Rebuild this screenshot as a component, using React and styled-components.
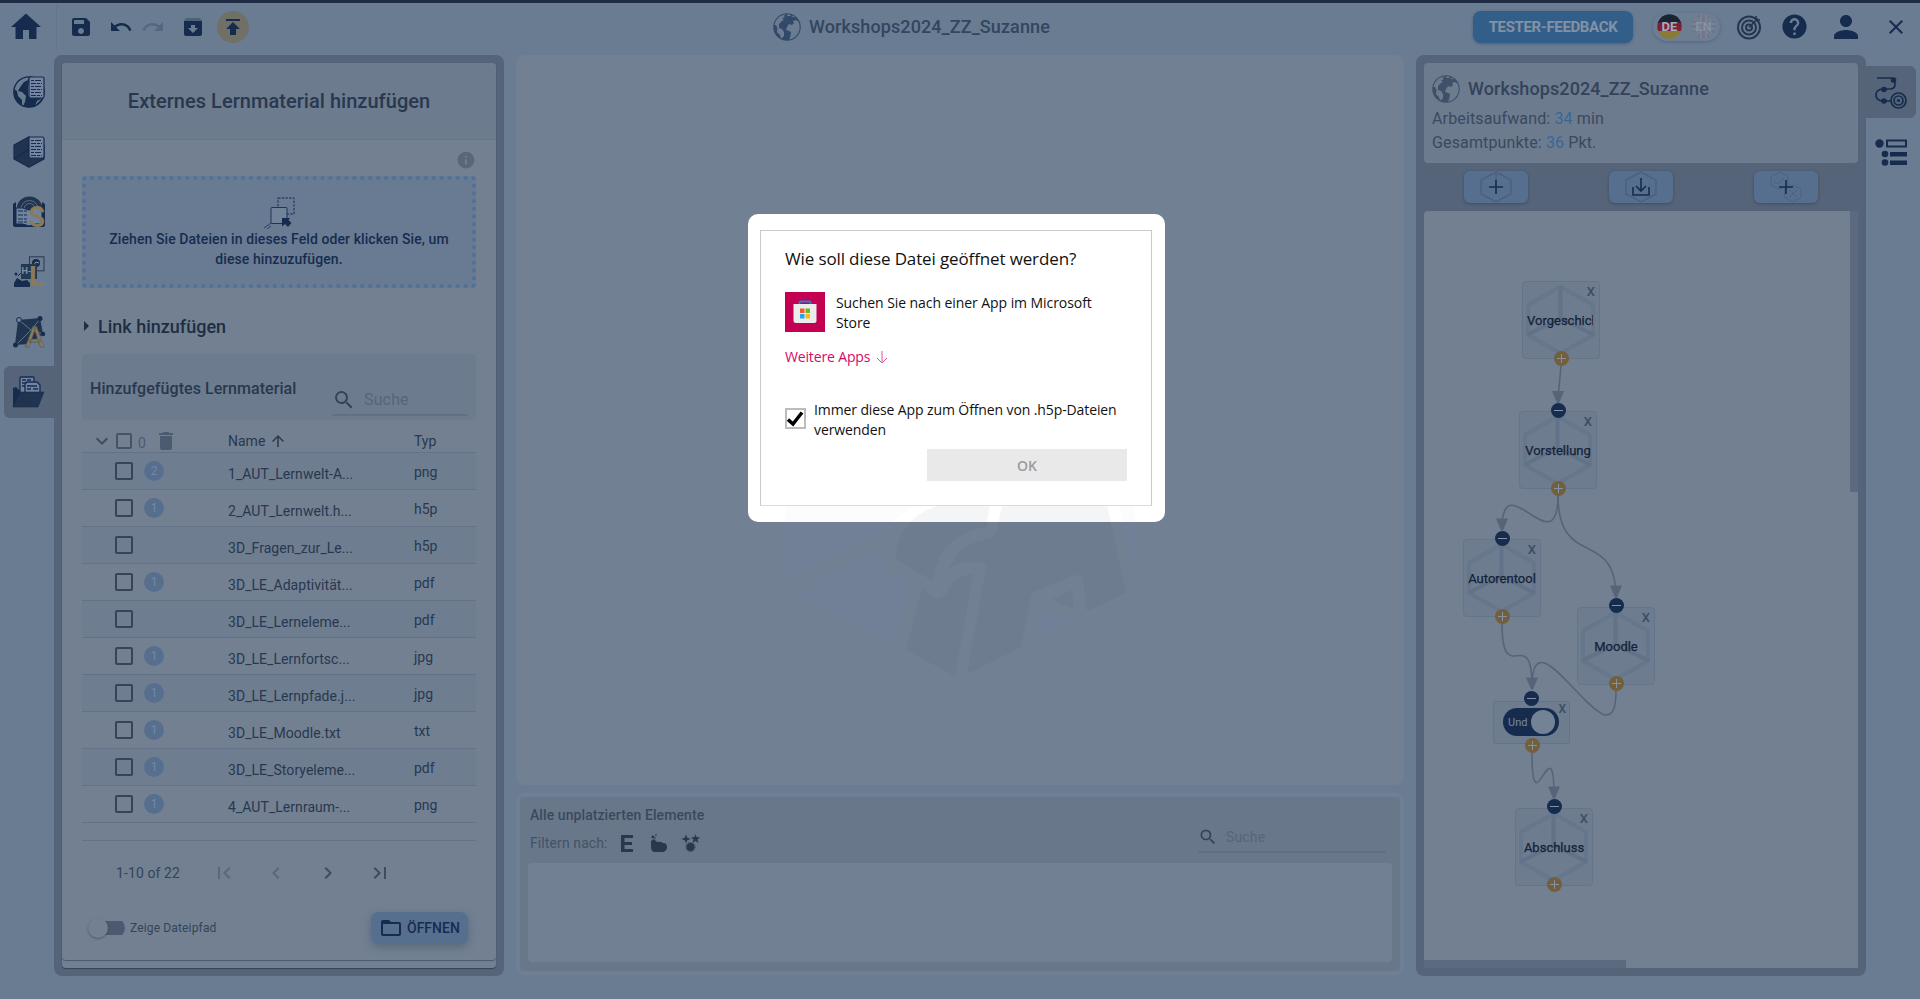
import React from "react";
import styled, { createGlobalStyle } from "styled-components";
import {
  MdHome, MdSave, MdUndo, MdRedo, MdPublish, MdInfo, MdSearch, MdDelete, MdExpandMore,
  MdArrowUpward, MdFirstPage, MdChevronLeft, MdChevronRight, MdLastPage, MdHelp, MdPerson,
  MdClose, MdArrowRight, MdFolderOpen,
} from "react-icons/md";

const c = {
  page: "#6a7c92",
  frame: "#556478",
  card: "#728092",
  soft: "#6d7b8e",
  navy: "#162c4f",
  ink: "#28384e",
  gray: "#3d4c61",
  blue: "#576f8f",
  link: "#376796",
};

const Global = createGlobalStyle`
  * { box-sizing: border-box; }
  body { margin: 0; background: ${c.page}; font-family: Roboto, "Liberation Sans", sans-serif; overflow: hidden; }
  svg { display: block; flex: none; }
`;

const Page = styled.div`
  position: relative; width: 1920px; height: 999px; background: ${c.page};
  border-top: 3px solid #1f2c44; display: flex; flex-direction: column; overflow: hidden;
`;
const TopBar = styled.header`
  height: 52px; flex: none; display: grid; grid-template-columns: 56px 717px 1fr auto; align-items: center; color: ${c.navy};
  padding-bottom: 5px;
`;
const HomeCell = styled.div`padding-left: 8px;`;
const Tools = styled.div`
  height: 44px; border-left: 1px solid #66758b; display: flex; align-items: center; padding-left: 12px;
`;
const Tool = styled.div`
  width: 24px; height: 24px; margin-right: ${(p) => p.$gap || 0}px; opacity: ${(p) => (p.$off ? 0.25 : 1)};
`;
const RoundTool = styled.div`
  width: 32px; height: 32px; border-radius: 50%; background: #717067; display: grid; place-items: center;
`;
const Project = styled.div`
  display: flex; align-items: center; gap: 8px; color: #33455f; font-size: 18px; font-weight: 500; line-height: 24px; letter-spacing: 0.1px;
`;
const TopRight = styled.div`display: flex; align-items: center;`;
const Feedback = styled.div`
  width: 160px; height: 32px; border-radius: 8px; background: #325f8a; color: #8391a4; font-size: 15px; font-weight: 700;
  display: grid; place-items: center; box-shadow: 0 1px 3px rgba(30, 50, 80, 0.4); letter-spacing: -0.35px; margin-right: 20px;
`;
const Languages = styled.div`
  width: 67px; height: 28px; border-radius: 14px; display: flex; align-items: center; justify-content: space-between; padding: 0 4px;
  box-shadow: 0 1px 3px rgba(40, 60, 90, 0.35); background: #6d7e93; margin-right: 16px;
`;
const IconSlot = styled.div`width: ${(p) => p.$w}px; margin-right: ${(p) => p.$mr || 0}px; display: grid; place-items: center;`;

const Body = styled.div`flex: 1; display: flex; align-items: flex-start;`;
const Rail = styled.nav`width: 54px; flex: none; padding-top: 11px; display: flex; flex-direction: column; gap: 8px; align-items: ${(p) => (p.$right ? "flex-start" : "flex-end")};`;
const RailTab = styled.div`
  width: 50px; height: 52px; padding: 10px 9px; background: ${(p) => (p.$active ? c.frame : "transparent")};
  border-radius: ${(p) => (p.$right ? "0 6px 6px 0" : "6px 0 0 6px")};
`;
const Frame = styled.section`
  width: 450px; height: 921px; flex: none; background: ${c.frame}; border-radius: 8px; padding: 8px;
  display: flex; flex-direction: column;
`;

const Sheet = styled.div`flex: 1; background: ${c.card}; border-radius: 4px; padding-bottom: 8px; display: flex; box-shadow: 0 1px 1px #34435a;`;
const SheetInner = styled.div`flex: 1; border-radius: 4px; box-shadow: 0 1px 1px #485870; display: flex; flex-direction: column;`;
const SheetTitle = styled.h1`
  margin: 0; height: 77px; border-bottom: 1px solid #66758a; border-radius: 4px 4px 0 0; background: ${c.soft}; color: ${c.ink};
  font-size: 20px; font-weight: 500; line-height: 76px; text-align: center; letter-spacing: 0.04px;
`;
const SheetBody = styled.div`padding: 10px 20px 0; display: flex; flex-direction: column;`;
const InfoRow = styled.div`display: flex; justify-content: flex-end; height: 26px; color: #586779;`;
const DropZone = styled.div`
  height: 112px; border: 4px dotted #4f7198; background: #697b92; border-radius: 4px; display: flex; flex-direction: column;
  align-items: center; padding-top: 17px; color: ${c.navy}; font-size: 14px; font-weight: 500; line-height: 20px; text-align: center;
`;
const DropText = styled.div`width: 370px; padding: 0 5px; letter-spacing: 0.08px;`;
const LinkRow = styled.div`
  height: 66px; display: flex; align-items: center; color: #1f2e42; font-size: 18px; font-weight: 500; margin-left: -8px; padding-top: 10px;
`;
const ListHead = styled.div`
  height: 66px; background: ${c.soft}; border-radius: 4px; padding: 0 8px; display: flex; justify-content: space-between; color: ${c.ink};
`;
const ListTitle = styled.h2`margin: 0; font-size: 16px; font-weight: 500; line-height: 70px; letter-spacing: 0.06px;`;
const Search = styled.div`
  width: ${(p) => p.$w}px; height: 26px; border-bottom: 2px solid #617085; display: flex; align-items: center; padding-bottom: ${(p) => p.$lift}px;
  gap: 8px; color: #34435a; font-size: ${(p) => p.$fs}px; margin-top: ${(p) => p.$top}px;
  span { color: #56657a; letter-spacing: .15px; }
`;
const Grid = styled.div`
  display: grid; grid-template-columns: 33px 29px 84px 186px 1fr; height: ${(p) => p.$h}px; align-items: center; color: ${c.ink}; font-size: 14px;
  background: ${(p) => (p.$odd ? "#6f7d90" : "transparent")}; border-bottom: 1px solid #637288;
`;
const HeadGrid = styled(Grid)`grid-template-columns: 34px 22px 90px 186px 1fr; color: ${c.gray}; padding-top: 9px;`;
const Right = styled.div`display: flex; justify-content: center; padding-left: 6px;`;
const Box = styled.div`width: ${(p) => p.$s}px; height: ${(p) => p.$s}px; border: 2px solid #354459; border-radius: 2px; opacity: ${(p) => (p.$dim ? 0.75 : 1)};`;
const Badge = styled.div`
  width: 20px; height: 20px; border-radius: 50%; background: ${c.blue}; color: #7488a2; font-size: 12px; line-height: 20px; text-align: center;
`;
const Name = styled.div`padding-top: 5px; letter-spacing: 0.05px;`;
const Typ = styled.div`padding-top: 2px;`;
const HeadCell = styled.div`display: flex; align-items: center; gap: 4px; color: ${c.ink};`;
const Count = styled.div`display: flex; align-items: center; gap: 8px; color: #4c5b70; span { padding-top: 3px; }`;
const EndLine = styled.div`height: 18px; border-bottom: 1px solid #637288;`;
const Pager = styled.div`
  height: 64px; display: flex; align-items: center; color: ${c.gray}; font-size: 14px; padding-left: 34px;
`;
const PageText = styled.div`width: 96px; letter-spacing: 0.1px; color: #34435a;`;
const PageBtn = styled.div`width: 52px; opacity: ${(p) => (p.$off ? 0.45 : 1)};`;
const Footer = styled.div`display: flex; justify-content: space-between; align-items: center; padding: 7px 8px 0 6px;`;
const ToggleRow = styled.div`display: flex; align-items: center; gap: 5px; color: #34435a; font-size: 12px; letter-spacing: .15px;`;
const Track = styled.div`width: 37px; height: 20px; display: flex; align-items: center; background: linear-gradient(#4b5a70, #4b5a70) 8px 3px / 29px 14px no-repeat; border-radius: 10px;`;
const Thumb = styled.div`width: 20px; height: 20px; border-radius: 50%; background: ${c.card}; box-shadow: 0 1px 2px rgba(35, 50, 75, 0.5);`;
const OpenBtn = styled.div`
  width: 97px; height: 32px; border-radius: 8px; background: ${c.blue}; color: ${c.navy}; font-size: 14px; font-weight: 500;
  display: flex; align-items: center; padding-left: 8px; gap: 4px; box-shadow: 0 3px 8px rgba(50, 65, 90, 0.4);
`;

const Middle = styled.main`width: 888px; margin: 0 12px; display: flex; flex-direction: column; gap: 8px;`;
const Stage = styled.div`height: 730px; background: #728093; border-radius: 8px; overflow: hidden; padding: 447px 0 0 264px;`;
const Unplaced = styled.div`height: 182px; border: 4px solid #708094; border-radius: 8px; background: #69778a;`;
const UnplacedInner = styled.div`height: 174px; border-radius: 6px; padding: 0 8px 9px; display: flex; flex-direction: column;`;
const UnplacedHead = styled.div`height: 66px; display: flex; justify-content: space-between; padding: 0 6px 0 2px; color: ${c.gray}; font-size: 14px;`;
const UnplacedTitle = styled.div`font-weight: 500; line-height: 20px; margin-top: 8px; color: #3a495f; letter-spacing: 0.08px;`;
const Filters = styled.div`display: flex; align-items: center; height: 36px; color: #435268; svg { margin-left: 13px; } letter-spacing: .1px;`;
const EmptyList = styled.div`flex: 1; background: #728093; border-radius: 4px;`;

const WorldCard = styled.div`height: 100px; flex: none; background: ${c.soft}; border-radius: 4px; padding: 12px 8px 0; color: #3a4960;`;
const Stat = styled.div`font-size: 16px; line-height: 24px; color: #3a495e; letter-spacing: 0.14px; b { font-weight: 400; color: ${c.link}; }`;
const WorldTitle = styled(Project)`color: #33435b; height: 28px; margin-bottom: 4px;`;
const Actions = styled.div`height: 48px; flex: none; display: flex; justify-content: space-around; align-items: center;`;
const Action = styled.div`
  width: 64px; height: 32px; border-radius: 6px; background: ${c.blue}; display: grid; place-items: center; box-shadow: 0 1px 3px rgba(40, 55, 80, 0.5);
`;
const Canvas = styled.div`position: relative; flex: 1; background: ${c.card}; border-radius: 4px 0 0 0; overflow: hidden;`;
const Edges = styled.svg`position: absolute; left: 0; top: 0;`;
const Bar = styled.div`position: absolute; background: #5b6a7e; ${(p) => (p.$v ? "right: 0; top: 0; width: 8px; height: 281px;" : "left: 0; bottom: 0; width: 202px; height: 8px;")}`;
const Node = styled.div`
  position: absolute; left: ${(p) => p.$x}px; top: ${(p) => p.$y}px; width: 78px; height: 78px; background: #6d7c8f; border: 1.5px solid #65748a;
  border-radius: 4px; color: #142238; font-size: 13px; font-weight: 400;
`;
const NodeArt = styled.svg`position: absolute; left: -1px; top: -1px;`;
const NodeLabel = styled.div`
  position: absolute; left: 4px; top: 31px; line-height: 16px; overflow: hidden; white-space: nowrap;
  -webkit-text-stroke: 0.25px #142238; text-align: ${(p) => (p.$long ? "left" : "center")}; width: ${(p) => (p.$long ? 66 : 68)}px;
`;
const Remove = styled.div`position: absolute; right: 4px; top: 2px; font-size: 13px; line-height: 16px; color: #3d4c62; font-weight: 500;`;
const Gate = styled.div`position: absolute; left: 69px; top: 490px; width: 77px; height: 43px; background: #6d7c8f; border: 1.5px solid #65748a; border-radius: 2px; padding: 6px 9px;`;
const GateSwitch = styled.div`
  width: 56px; height: 28px; border-radius: 14px; background: ${c.navy}; color: #7b899d; font-size: 11px; display: flex; align-items: center; justify-content: space-between; padding: 0 4px 0 5px;
`;
const GateRemove = styled(Remove)`right: 3px; top: -1px; font-size: 12px;`;
const Knob = styled.div`width: 24px; height: 24px; border-radius: 50%; background: #748296;`;
const Handle = styled.div`
  position: absolute; left: ${(p) => p.$x - 7.5}px; top: ${(p) => p.$y - 7.5}px; width: 15px; height: 15px; border-radius: 50%;
  background: ${(p) => (p.$plus ? "#735f3b" : c.navy)}; display: grid; place-items: center;
`;

const Dialog = styled.div`
  position: absolute; left: 748px; top: 211px; width: 417px; height: 308px; background: #fff; border-radius: 10px; padding: 16px 13px 0 12px;
  font-family: "Open Sans", "Noto Sans", sans-serif; color: #111; overflow: hidden;
`;
const DialogFrame = styled.div`height: 276px; border: 1px solid #c9cacb; border-bottom-color: #dcdcdc; padding: 16px 24px 0; display: flex; flex-direction: column; align-items: flex-start;`;
const Question = styled.div`font-size: 17px; line-height: 24px; white-space: nowrap; letter-spacing: -0.13px;`;
const StoreRow = styled.div`display: flex; gap: 11px; margin-top: 21px;`;
const DText = styled.div`font-size: 14px; line-height: 19.6px; white-space: nowrap; letter-spacing: ${(p) => p.$ls || "-0.11px"}; padding-top: 1px;`;
const More = styled.div`display: flex; align-items: center; gap: 6px; color: #d6086a; font-size: 14px; line-height: 20px; margin-top: 15px; letter-spacing: -0.15px;`;
const AlwaysRow = styled.div`display: flex; align-items: center; gap: 8px; margin-top: 32px; margin-bottom: 10px;`;
const Check = styled.div`width: 21px; height: 21px; border: 2px solid #bcbcbc; display: grid; place-items: center; margin-top: 9px; align-self: flex-start;`;
const Ok = styled.div`width: 200px; height: 32px; background: #e9e9e9; color: #9b9b9b; font-size: 14px; font-weight: 600; display: grid; place-items: center; align-self: flex-end;`;
const DialogMark = styled.div`height: 16px; margin-left: 25px;`;

const Globe = ({ size = 28, color = "#3f5068" }) => (
  <svg width={size} height={size} viewBox="0 0 28 28">
    <circle cx="14" cy="14" r="13.2" fill="none" stroke={color} strokeWidth="1.1" />
    <path fill={color} d="M9 2 11 3 12 1.5 15 1 14 3 17 3 18 1.5 20 3 18 4 21 4 24 5 26 9 23 7 20 8 21 10 19 12 16 11 14 14 13 17 15 17.500 18 19 17.500 23 16 27 11 27 8 26 11 23 11 19 9 16 6 15 6 11 9 8 11 7 9 5.500 12 4Z" />
    <path fill={color} d="M.8 12 3 12 4.500 15 4 19 7 22 8 26 4 23 1.200 18Z" />
  </svg>
);

const DocSheet = ({ x = 16, y = 1, h = 21 }) => (
  <g>
    <rect x={x} y={y} width="15" height={h} rx="1.5" fill="#7385a0" stroke={c.navy} strokeWidth="1.2" />
    <g stroke={c.navy} strokeWidth="1.1">
      {[4, 7, 10, 13, 16, 19].filter((v) => v < h).map((v, i) => (
        <path key={v} d={`M${x + 2} ${y + v - 0.5}h11`} strokeDasharray={i % 2 ? "5 1 3 1" : "3 1 6 1"} />
      ))}
    </g>
  </g>
);

const RailIcon = ({ kind }) => (
  <svg width="32" height="32" viewBox="0 0 32 32" overflow="visible">
    {kind === "world" && (
      <g>
        <circle cx="16" cy="16" r="15.200" fill="none" stroke={c.navy} strokeWidth="1.300" />
        <path fill={c.navy} d="M16 .8 15 4 11 6 8 10 6 13 5 15 9 16 13 20 12 26 10 30 16 31.500 22 30 24 25 30 22 17 22 15 19 15 10 16 6Z" />
        <path fill={c.navy} d="M1 13 4 15 5 20 9 24 9 30 4 26 1 20Z" />
        <path stroke={c.navy} d="M23 29 30 22" />
        <DocSheet />
      </g>
    )}
    {kind === "room" && (
      <g>
        <path fill="#21344f" stroke={c.navy} strokeWidth="1.200" strokeLinejoin="round" d="M1 9 16 .8 31 9V23L16 31.200 1 23Z" />
        <path fill="none" stroke={c.navy} strokeWidth="1.500" d="M16 1V13L1 23M16 13 31 23" />
        <DocSheet />
      </g>
    )}
    {kind === "story" && (
      <g>
        <path fill="#21344f" d="M4 12A12.500 11.500 0 0 1 29 12V16H4Z" />
        <path fill="none" stroke="#687a91" strokeWidth=".8" d="M8 13a8.500 8.500 0 0 1 17 0M11 13a5.500 5.500 0 0 1 11 0" />
        <path fill={c.navy} d="M0 8 3 6V28H30V31H2Q0 31 0 29ZM29 6 32 8V29Q32 31 30 31H27Z" />
        <path fill="#7083a0" stroke={c.navy} d="M3 12Q10 11 16 14 22 11 29 12V28Q22 27 16 30 10 27 3 28Z" />
        <path stroke={c.navy} strokeWidth="1.100" strokeDasharray="5 1 3 1" d="M5 15H14M5 19H14M5 23H14M5 26H14" />
        <text x="15.500" y="30.700" fontFamily="Roboto" fontSize="29" fontWeight="500" fill="#8b7a58" textLength="16.500" lengthAdjust="spacingAndGlyphs">S</text>
      </g>
    )}
    {kind === "element" && (
      <g>
        <rect x="16.500" y=".8" width="14.500" height="14" fill="none" stroke="#2d3e58" strokeWidth="1.100" />
        <circle cx="23" cy="7" r="4" fill={c.navy} /><path d="M20 10 23 6 26 7" stroke="#8b9ab0" fill="none" />
        <rect x="8" y="8" width="16" height="15" fill="#253751" />
        <text x="8.500" y="18" fontFamily="Roboto" fontSize="9" fontWeight="700" fill="#8190a5">H-</text>
        <path fill={c.navy} d="M1 31V27L4 22 9 25 14 24 17 27V31Z" />
        <circle cx="3" cy="18" r="1.500" fill={c.navy} /><path d="M5 20 8 17" stroke={c.navy} />
        <text x="16" y="30" fontFamily="Roboto" fontSize="28" fontWeight="700" fill="#8b7a58">L</text>
      </g>
    )}
    {kind === "adapt" && (
      <g>
        <path fill="#21344f" d="M5 4 27 2 30 18 16 28 2 29Z" />
        <path stroke="#7083a0" strokeWidth=".8" fill="none" d="M6 4 18 14 27 3M18 14 3 29M18 14 30 18" />
        <circle cx="6" cy="4" r="2.500" fill="#7083a0" stroke={c.navy} />
        <circle cx="27" cy="2.500" r="2.500" fill={c.navy} /><circle cx="30" cy="18" r="2.200" fill={c.navy} /><circle cx="2.500" cy="29" r="2.500" fill={c.navy} />
        <text x="12" y="31" fontFamily="Roboto" fontSize="29" fontWeight="500" fill="#8b7a58" stroke="#3e4858" strokeWidth=".4">A</text>
      </g>
    )}
    {kind === "folder" && (
      <g>
        <path fill={c.navy} d="M0 31V12L3 11 6 14H9L13 31Z" />
        <rect x="7" y="1" width="14" height="18" rx="1" fill="#7083a0" stroke={c.navy} strokeWidth="1.300" />
        <path d="M9 4H13M9 7H18M14 4H18M9 10H12" stroke={c.navy} strokeWidth="1.300" />
        <path d="M12 8 14 6H24L27 9V18H12Z" fill="#7083a0" stroke={c.navy} strokeWidth="1.300" />
        <path d="M14 10H24M14 13H18M20 13H25" stroke={c.navy} strokeWidth="1.300" />
        <path fill="#21344f" stroke={c.navy} strokeWidth=".6" d="M7 16H31L25 31H0Z" />
      </g>
    )}
    {kind === "path" && (
      <g fill="none" stroke={c.navy} strokeWidth="1.700">
        <path d="M2 2H16Q20 2 20 8 20 13 15 13H7Q1 14 1 19 1 24 7 25H16" />
        <g fill={c.navy} stroke="none"><circle cx="18.500" cy="4" r="2.800" /><circle cx="9" cy="13.500" r="2.800" /><circle cx="9" cy="25" r="2.800" /></g>
        <circle cx="23.500" cy="24.500" r="7.500" /><circle cx="23.500" cy="24.500" r="4.500" /><circle cx="23.500" cy="24.500" r="1.600" fill={c.navy} stroke="none" />
      </g>
    )}
    {kind === "list" && (
      <g fill={c.navy}>
        <circle cx="4.500" cy="7.500" r="4.200" /><circle cx="10" cy="18" r="3.300" /><circle cx="10" cy="26.500" r="3.300" />
        <path fillRule="evenodd" d="M11 3.500H32V11.500H11ZM13 5.500V9.500H30V5.500ZM15 16H32V20.500H15ZM15 24.500H32V29H15Z" />
      </g>
    )}
  </svg>
);

const ArchiveIcon = () => (
  <svg width="24" height="24" viewBox="0 0 24 24">
    <path d="M5 3H19L21 6H3Z" fill="#50617c" />
    <path fill={c.navy} fillRule="evenodd" d="M3 6H21V19Q21 21 19 21H5Q3 21 3 19ZM10 10V13H7L12 18 17 13H14V10Z" />
  </svg>
);
const TargetIcon = () => (
  <svg width="26" height="26" viewBox="0 0 26 26" fill="none" stroke="#22364f" strokeWidth="2">
    <circle cx="13" cy="13.500" r="11" /><circle cx="13" cy="13.500" r="7" /><circle cx="13" cy="13.500" r="3" />
    <path d="M13 13.500 22 4.500M20 2V6H24" strokeWidth="1.600" />
  </svg>
);
const Flag = ({ uk }) => (
  <svg width="25" height="25" viewBox="0 0 25 25">
    <clipPath id={uk ? "uk" : "de"}><circle cx="12.500" cy="12.500" r="12.200" /></clipPath>
    <g clipPath={`url(#${uk ? "uk" : "de"})`}>
      {uk ? (
        <g><path fill="#67788f" d="M0 0H25V25H0Z" /><path stroke="#768498" strokeWidth="4" d="M0 0 25 25M25 0 0 25" /><path stroke="#767489" strokeWidth="1.300" d="M0 0 25 25M25 0 0 25" /><path stroke="#768498" strokeWidth="7" d="M12.500 0V25M0 12.500H25" /><path stroke="#767489" strokeWidth="3" d="M12.500 0V25M0 12.500H25" /></g>
      ) : (
        <g><path fill="#1b2531" d="M0 0H25V9H0Z" /><path fill="#7c2038" d="M0 8.500H25V17H0Z" /><path fill="#8a7a32" d="M0 17H25V25H0Z" /></g>
      )}
    </g>
    <text x="12.500" y="17" textAnchor="middle" fontFamily="Roboto" fontSize="13" fontWeight="700" fill={uk ? "#8491a4" : "#a3adba"}>{uk ? "EN" : "DE"}</text>
  </svg>
);
const DropIcon = () => (
  <svg width="32" height="32" viewBox="0 0 32 32" fill="none" stroke={c.navy}>
    <rect x="15" y="1" width="16" height="16" strokeDasharray="2.500 1.200" /><rect x="8" y="10.500" width="16" height="16" rx="1" fill="#728299" strokeWidth=".9" />
    <path fill={c.navy} stroke="none" d="M19 21H27L25.500 23 28.500 26 25 30 22 27 19 29.500Z" /><path strokeWidth=".8" d="M8 26 1 31M8 29 4 32" />
  </svg>
);

const Watermark = ({ light, w, h, box }) => (
  <svg width={w} height={h} viewBox={box}>
    <g fill={light ? "#fcfcfe" : "#718096"}>
      <path d="M45 20H190Q155 36 145 50L45 101Z" />
      <path d="M55 114 144 68V87L168 103 155 163Z" />
      <path d="M378 20H395V92Z" />
      <path d="M302 130 330 142 295 159Z" />
    </g>
    <g fill={light ? "#f4f5f7" : "#6d7c8f"}>
      <path d="M215 22Q156 34 156 79L193 101Q198 55 246 47L251 20Z" />
      <path d="M264 20H366L386 113 347 131 343 98Q340 93 332 96L296 111Q292 113 291 117L281 167 227 194 246 87Q246 82 239 82 218 81 209 89 220 62 249 59 254 58 256 52Z" />
      <path d="M182 109 197 119Q204 119 208 110 216 95 233 94L215 196 166 170Z" />
      <path d="M312 119 332 110 334 130Z" />
    </g>
  </svg>
);

const Hex = () => (
  <NodeArt width="78" height="78" viewBox="0 0 78 78" fill="none" stroke="#66758a" strokeWidth="4" strokeLinejoin="round">
    <path d="M38.500 5.500 71 24V54L38.500 72.500 6 54V24Z" opacity=".75" /><path d="M38.500 5V37L5 54M38.500 37 72 54" stroke="#627288" />
  </NodeArt>
);
const PlusMinus = ({ plus }) => (
  <svg width="9" height="9" viewBox="0 0 9 9" stroke="#8592a3"><path d={plus ? "M0 4.500H9M4.500 0V9" : "M0 4.500H9"} /></svg>
);

const files = [
  ["2", "1_AUT_Lernwelt-A...", "png"], ["1", "2_AUT_Lernwelt.h...", "h5p"], ["", "3D_Fragen_zur_Le...", "h5p"],
  ["1", "3D_LE_Adaptivität...", "pdf"], ["", "3D_LE_Lerneleme...", "pdf"], ["1", "3D_LE_Lernfortsc...", "jpg"],
  ["1", "3D_LE_Lernpfade.j...", "jpg"], ["1", "3D_LE_Moodle.txt", "txt"], ["1", "3D_LE_Storyeleme...", "pdf"], ["1", "4_AUT_Lernraum-...", "png"],
];
const nodes = [[98, 70, "Vorgeschicht"], [95, 200, "Vorstellung"], [39, 328, "Autorentool"], [153, 396, "Moodle"], [91, 597, "Abschluss"]];
const pluses = [[137, 147.5], [134, 277.5], [78, 405.5], [192, 472.5], [108, 534.5], [130, 673.5]];
const minuses = [[134, 199.5], [78, 327.5], [192, 394.5], [107.500, 487.5], [130, 595.5]];
const edges = [
  "M137 155 134.500 182", "M134 284C134 357 78 250 78 318", "M134 284C134 360 192 315 192 387",
  "M78 412C78 480 108 410 108 476", "M192 480C192 565 108 390 108 476", "M108 542C108 620 130 510 130 585",
];
const tips = [[134, 193], [78, 320.5], [192, 387.5], [108, 479.5], [130, 588.5]];

const ActionIcon = ({ children }) => (
  <svg width="32" height="32" viewBox="0 0 32 32" fill="none">{children}</svg>
);

export default function App() {
  return (
    <Page>
      <Global />
      <TopBar>
        <HomeCell><MdHome size={36} /></HomeCell>
        <Tools>
          <Tool $gap={16}><MdSave size={24} /></Tool>
          <Tool $gap={8}><MdUndo size={24} /></Tool>
          <Tool $gap={16} $off><MdRedo size={24} /></Tool>
          <Tool $gap={12}><ArchiveIcon /></Tool>
          <RoundTool><MdPublish size={24} /></RoundTool>
        </Tools>
        <Project><Globe color="#33496a" />Workshops2024_ZZ_Suzanne</Project>
        <TopRight>
          <Feedback>TESTER-FEEDBACK</Feedback>
          <Languages><Flag /><Flag uk /></Languages>
          <IconSlot $w={24}><TargetIcon /></IconSlot>
          <IconSlot $w={68}><MdHelp size={29} /></IconSlot>
          <IconSlot $w={36} $mr={8}><MdPerson size={36} /></IconSlot>
          <IconSlot $w={48}><MdClose size={24} /></IconSlot>
        </TopRight>
      </TopBar>
      <Body>
        <Rail>
          {["world", "room", "story", "element", "adapt", "folder"].map((k) => (
            <RailTab key={k} $active={k === "folder"}><RailIcon kind={k} /></RailTab>
          ))}
        </Rail>
        <Frame>
          <Sheet><SheetInner>
            <SheetTitle>Externes Lernmaterial hinzufügen</SheetTitle>
            <SheetBody>
              <InfoRow><MdInfo size={20} /></InfoRow>
              <DropZone><DropIcon /><DropText>Ziehen Sie Dateien in dieses Feld oder klicken Sie, um diese hinzuzufügen.</DropText></DropZone>
              <LinkRow><MdArrowRight size={24} />Link hinzufügen</LinkRow>
              <ListHead>
                <ListTitle>Hinzufgefügtes Lernmaterial</ListTitle>
                <Search $w={136} $top={36} $fs={16} $lift={5}><MdSearch size={24} /><span>Suche</span></Search>
              </ListHead>
              <HeadGrid $h={33}>
                <Right><MdExpandMore size={24} /></Right>
                <Box $s={16} $dim />
                <Count><span>0</span><MdDelete size={24} /></Count>
                <HeadCell>Name <MdArrowUpward size={18} /></HeadCell>
                <HeadCell>Typ</HeadCell>
              </HeadGrid>
              {files.map(([n, name, typ], i) => (
                <Grid key={name} $h={37} $odd={i % 2 === 0}>
                  <span /><Box $s={18} />
                  {n ? <Badge>{n}</Badge> : <span />}
                  <Name>{name}</Name><Typ>{typ}</Typ>
                </Grid>
              ))}
              <EndLine />
              <Pager>
                <PageText>1-10 of 22</PageText>
                <PageBtn $off><MdFirstPage size={24} /></PageBtn>
                <PageBtn $off><MdChevronLeft size={24} /></PageBtn>
                <PageBtn><MdChevronRight size={24} /></PageBtn>
                <PageBtn><MdLastPage size={24} /></PageBtn>
              </Pager>
              <Footer>
                <ToggleRow><Track><Thumb /></Track>Zeige Dateipfad</ToggleRow>
                <OpenBtn><MdFolderOpen size={24} />ÖFFNEN</OpenBtn>
              </Footer>
            </SheetBody>
          </SheetInner></Sheet>
        </Frame>
        <Middle>
          <Stage><Watermark w={360} h={180} box="40 22 360 180" /></Stage>
          <Unplaced><UnplacedInner>
            <UnplacedHead>
              <div>
                <UnplacedTitle>Alle unplatzierten Elemente</UnplacedTitle>
                <Filters>
                  Filtern nach:
                  <svg width="12" height="17" viewBox="0 0 12 17" fill="#27384f"><path d="M0 0H12V3H3.500V7H11V10H3.500V14H12V17H0Z" /></svg>
                  <svg width="22" height="20" viewBox="0 0 22 20" fill="#27384f"><path d="M5 8 8 6 11 9Q14 8 17 10 21 10 21 14 21 18 17 19H8Q5 18 5 14Z" /><circle cx="7" cy="4" r="1.600" /><path d="M9 2H11M9 5H10" stroke="#27384f" /></svg>
                  <svg width="20" height="20" viewBox="0 0 20 20" fill="#27384f"><path d="M5 1 6 4.500 9.500 6 6 7.500 5 11 4 7.500.5 6 4 4.500ZM14.500 1 15.500 4 19 4.500 16.500 6.500 17.500 10 14.500 8 11.500 10 12.500 6.500 10 4.500 13.500 4Z" /><circle cx="9.500" cy="14" r="4" /><circle cx="9.500" cy="14" r="4.500" fill="none" stroke="#27384f" strokeDasharray="1 1" /></svg>
                </Filters>
              </div>
              <Search $w={188} $top={30} $fs={14} $lift={4}><MdSearch size={20} /><span>Suche</span></Search>
            </UnplacedHead>
            <EmptyList />
          </UnplacedInner></Unplaced>
        </Middle>
        <Frame>
          <WorldCard>
            <WorldTitle><Globe />Workshops2024_ZZ_Suzanne</WorldTitle>
            <Stat>Arbeitsaufwand: <b>34</b> min</Stat>
            <Stat>Gesamtpunkte: <b>36</b> Pkt.</Stat>
          </WorldCard>
          <Actions>
            <Action><ActionIcon><path stroke="#4c6180" strokeWidth="1.500" d="M16 1 31 9V23L16 31 1 23V9ZM16 1V16" /><path stroke={c.navy} strokeWidth="1.600" d="M16 9V23M9 16H23" /></ActionIcon></Action>
            <Action><ActionIcon><path stroke="#4c6180" strokeWidth="1.500" d="M16 1 31 9V23L16 31 1 23V9Z" /><path stroke={c.navy} strokeWidth="1.600" d="M16 7V20M11 15 16 20 21 15M8 16V24H24V16" /></ActionIcon></Action>
            <Action><ActionIcon><path stroke="#4c6180" strokeWidth="1" d="M9.500 1 18 5.500V14L9.500 18.500 1 14V5.500ZM23 14 31 18V26.500L23 31 14.500 26.500V18ZM4 11 8 13 14 7M19 19 27 26M27 19 19 26" /><path stroke={c.navy} strokeWidth="1.600" d="M16 9V23M9 16H23" /></ActionIcon></Action>
          </Actions>
          <Canvas>
            {nodes.map(([x, y, t]) => (
              <Node key={t} $x={x} $y={y}><Hex /><NodeLabel $long={t === "Vorgeschicht"}>{t}</NodeLabel><Remove>X</Remove></Node>
            ))}
            <Gate><GateSwitch>Und<Knob /></GateSwitch><GateRemove>X</GateRemove></Gate>
            {pluses.map(([x, y]) => <Handle key={x + "p" + y} $x={x} $y={y} $plus><PlusMinus plus /></Handle>)}
            {minuses.map(([x, y]) => <Handle key={x + "m" + y} $x={x} $y={y}><PlusMinus /></Handle>)}
            <Edges width="434" height="758" fill="none" stroke="#556478" strokeWidth="1.600">
              {edges.map((d) => <path key={d} d={d} />)}
              {tips.map(([x, y]) => <path key={x + "t" + y} fill="#556478" stroke="none" d={`M${x - 6} ${y - 13}h12l-5 12h-2Z`} />)}
            </Edges>
            <Bar $v /><Bar />
          </Canvas>
        </Frame>
        <Rail $right>
          <RailTab $active $right><RailIcon kind="path" /></RailTab>
          <RailTab $right><RailIcon kind="list" /></RailTab>
        </Rail>
      </Body>
      <Dialog>
        <DialogFrame>
          <Question>Wie soll diese Datei geöffnet werden?</Question>
          <StoreRow>
            <svg width="40" height="40" viewBox="0 0 40 40">
              <path fill="#c30052" d="M0 0H40V40H0Z" /><path d="M14.500 12V10.500Q14.500 9.500 15.500 9.500H24.500Q25.500 9.500 25.500 10.500V12" fill="none" stroke="#1b86d0" strokeWidth="1.800" />
              <path fill="#ececec" d="M8.500 12H31.500V28.500Q31.500 31 29 31H11Q8.500 31 8.500 28.500Z" />
              <path fill="#f25a2b" d="M15 16.500h4.500V21H15z" /><path fill="#6cb52d" d="M20.500 16.500H25V21h-4.500z" /><path fill="#24a4ea" d="M15 22h4.500v4.500H15z" /><path fill="#fbb813" d="M20.500 22H25v4.500h-4.500z" />
            </svg>
            <DText $ls="-0.07px">Suchen Sie nach einer App im Microsoft<br />Store</DText>
          </StoreRow>
          <More>Weitere Apps
            <svg width="12" height="13" viewBox="0 0 12 13" fill="none" stroke="#e0559a"><path d="M6 0V12M1 7 6 12 11 7" /></svg>
          </More>
          <AlwaysRow>
            <Check><svg width="17" height="17" viewBox="0 0 17 17" fill="none" stroke="#000" strokeWidth="3.400"><path d="M1 9.500 6 14 15 2.500" /></svg></Check>
            <DText>Immer diese App zum Öffnen von .h5p-Dateien<br />verwenden</DText>
          </AlwaysRow>
          <Ok>OK</Ok>
        </DialogFrame>
        <DialogMark><Watermark light w={350} h={16} box="45 27 350 16" /></DialogMark>
      </Dialog>
    </Page>
  );
}
